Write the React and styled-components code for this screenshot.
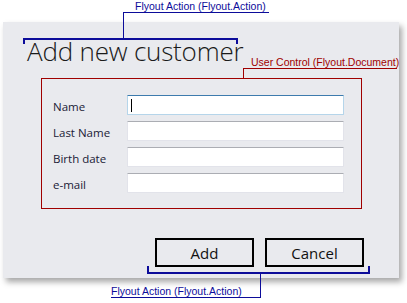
import styled, { createGlobalStyle } from "styled-components";

const GlobalStyle = createGlobalStyle`
  html, body {
    margin: 0;
    padding: 0;
    background: #ffffff;
  }
  body {
    font-family: "Open Sans", "Noto Sans", sans-serif;
  }
`;

const BLUE = "#0c0c9a";
const RED = "#a00000";

const fields = [
  { label: "Name", focused: true },
  { label: "Last Name" },
  { label: "Birth date" },
  { label: "e-mail" },
];

function App() {
  return (
    <Page>
      <GlobalStyle />
      <Panel>
        <Title>Add new customer</Title>
        <DocumentBox>
          {fields.map((f) => (
            <Row key={f.label}>
              <Label>{f.label}</Label>
              <TextBox focused={f.focused}>{f.focused && <Caret />}</TextBox>
            </Row>
          ))}
        </DocumentBox>
        <ButtonBar>
          <Button>Add</Button>
          <Button>Cancel</Button>
        </ButtonBar>
      </Panel>

      {/* callout over the title */}
      <Callout style={{ left: 123, top: 0 }}>
        <CallText color={BLUE} indent={12} width={146}>
          Flyout Action (Flyout.Action)
        </CallText>
        <Leader color={BLUE} height={26} />
      </Callout>
      <Bracket color={BLUE} style={{ left: 23, top: 38, width: 215, height: 6 }} />

      {/* callout over the user control */}
      <Callout style={{ left: 243, top: 56 }}>
        <CallText color={RED} indent={8} width={154}>
          User Control (Flyout.Document)
        </CallText>
        <Leader color={RED} height={10} />
      </Callout>

      {/* callout under the buttons */}
      <Bracket bottom color={BLUE} style={{ left: 147, top: 266, width: 223, height: 8 }} />
      <Callout style={{ left: 111, top: 274 }}>
        <CallText color={BLUE} indent={0} width={150} drop={11}>
          Flyout Action (Flyout.Action)
        </CallText>
      </Callout>
    </Page>
  );
}

const Page = styled.div`
  position: relative;
  width: 407px;
  height: 303px;
  padding: 22px 0 0 3px;
  box-sizing: border-box;
  overflow: hidden;
`;

const Panel = styled.div`
  width: 396px;
  height: 256px;
  background: #e9eaee;
  box-shadow: 3px 4px 6px rgba(0, 0, 0, 0.35);
  display: flex;
  flex-direction: column;
  padding: 12px 36px 0 38px;
  box-sizing: border-box;
`;

const Title = styled.div`
  margin-left: -14px;
  font-family: "Open Sans", sans-serif;
  font-weight: 300;
  font-size: 26px;
  line-height: 34px;
  color: #1a1a1a;
  letter-spacing: -0.2px;
  height: 34px;
`;

const DocumentBox = styled.div`
  margin-top: 10px;
  width: 321px;
  height: 131px;
  box-sizing: border-box;
  border: 1px solid ${RED};
  padding: 16px 17px 0 11px;
  display: flex;
  flex-direction: column;
  gap: 6px;
`;

const Row = styled.div`
  display: flex;
  align-items: center;
  height: 20px;
`;

const Label = styled.div`
  width: 74px;
  font-size: 11.5px;
  color: #1a1a36;
  padding-top: 3px;
`;

const TextBox = styled.div`
  position: relative;
  width: 217px;
  height: 20px;
  box-sizing: border-box;
  background: #ffffff;
  border: 1px solid ${(p) => (p.focused ? "#b5d5ea" : "#e2e3ea")};
  border-top-color: ${(p) => (p.focused ? "#3d7bad" : "#abadb3")};
  border-radius: 1px;
`;

const Caret = styled.span`
  position: absolute;
  left: 3px;
  top: 3px;
  width: 1px;
  height: 13px;
  background: #000;
`;

const ButtonBar = styled.div`
  margin-top: 29px;
  display: flex;
  justify-content: flex-end;
  gap: 11px;
  margin-right: -1px;
`;

const Button = styled.div`
  width: 99px;
  height: 29px;
  box-sizing: border-box;
  border: 2px solid #000;
  display: flex;
  align-items: center;
  justify-content: center;
  font-size: 15px;
  color: #111;
`;

const Callout = styled.div`
  position: absolute;
  display: flex;
  flex-direction: column;
`;

const CallText = styled.div`
  width: ${(p) => p.width}px;
  box-sizing: border-box;
  padding-left: ${(p) => p.indent}px;
  padding-top: ${(p) => p.drop || 0}px;
  border-bottom: 1px solid ${(p) => p.color};
  ${(p) => (p.drop ? `border-right: 1px solid ${p.color};` : "")}
  font-family: "Liberation Sans", Arial, sans-serif;
  font-size: 10.5px;
  line-height: 12px;
  color: ${(p) => p.color};
  white-space: nowrap;
`;

const Leader = styled.div`
  width: 0;
  height: ${(p) => p.height}px;
  border-left: 1px solid ${(p) => p.color};
`;

const Bracket = styled.div`
  position: absolute;
  box-sizing: border-box;
  border: 2px solid ${(p) => p.color};
  ${(p) => (p.bottom ? "border-top: none;" : "border-bottom: none;")}
`;

export default App;
